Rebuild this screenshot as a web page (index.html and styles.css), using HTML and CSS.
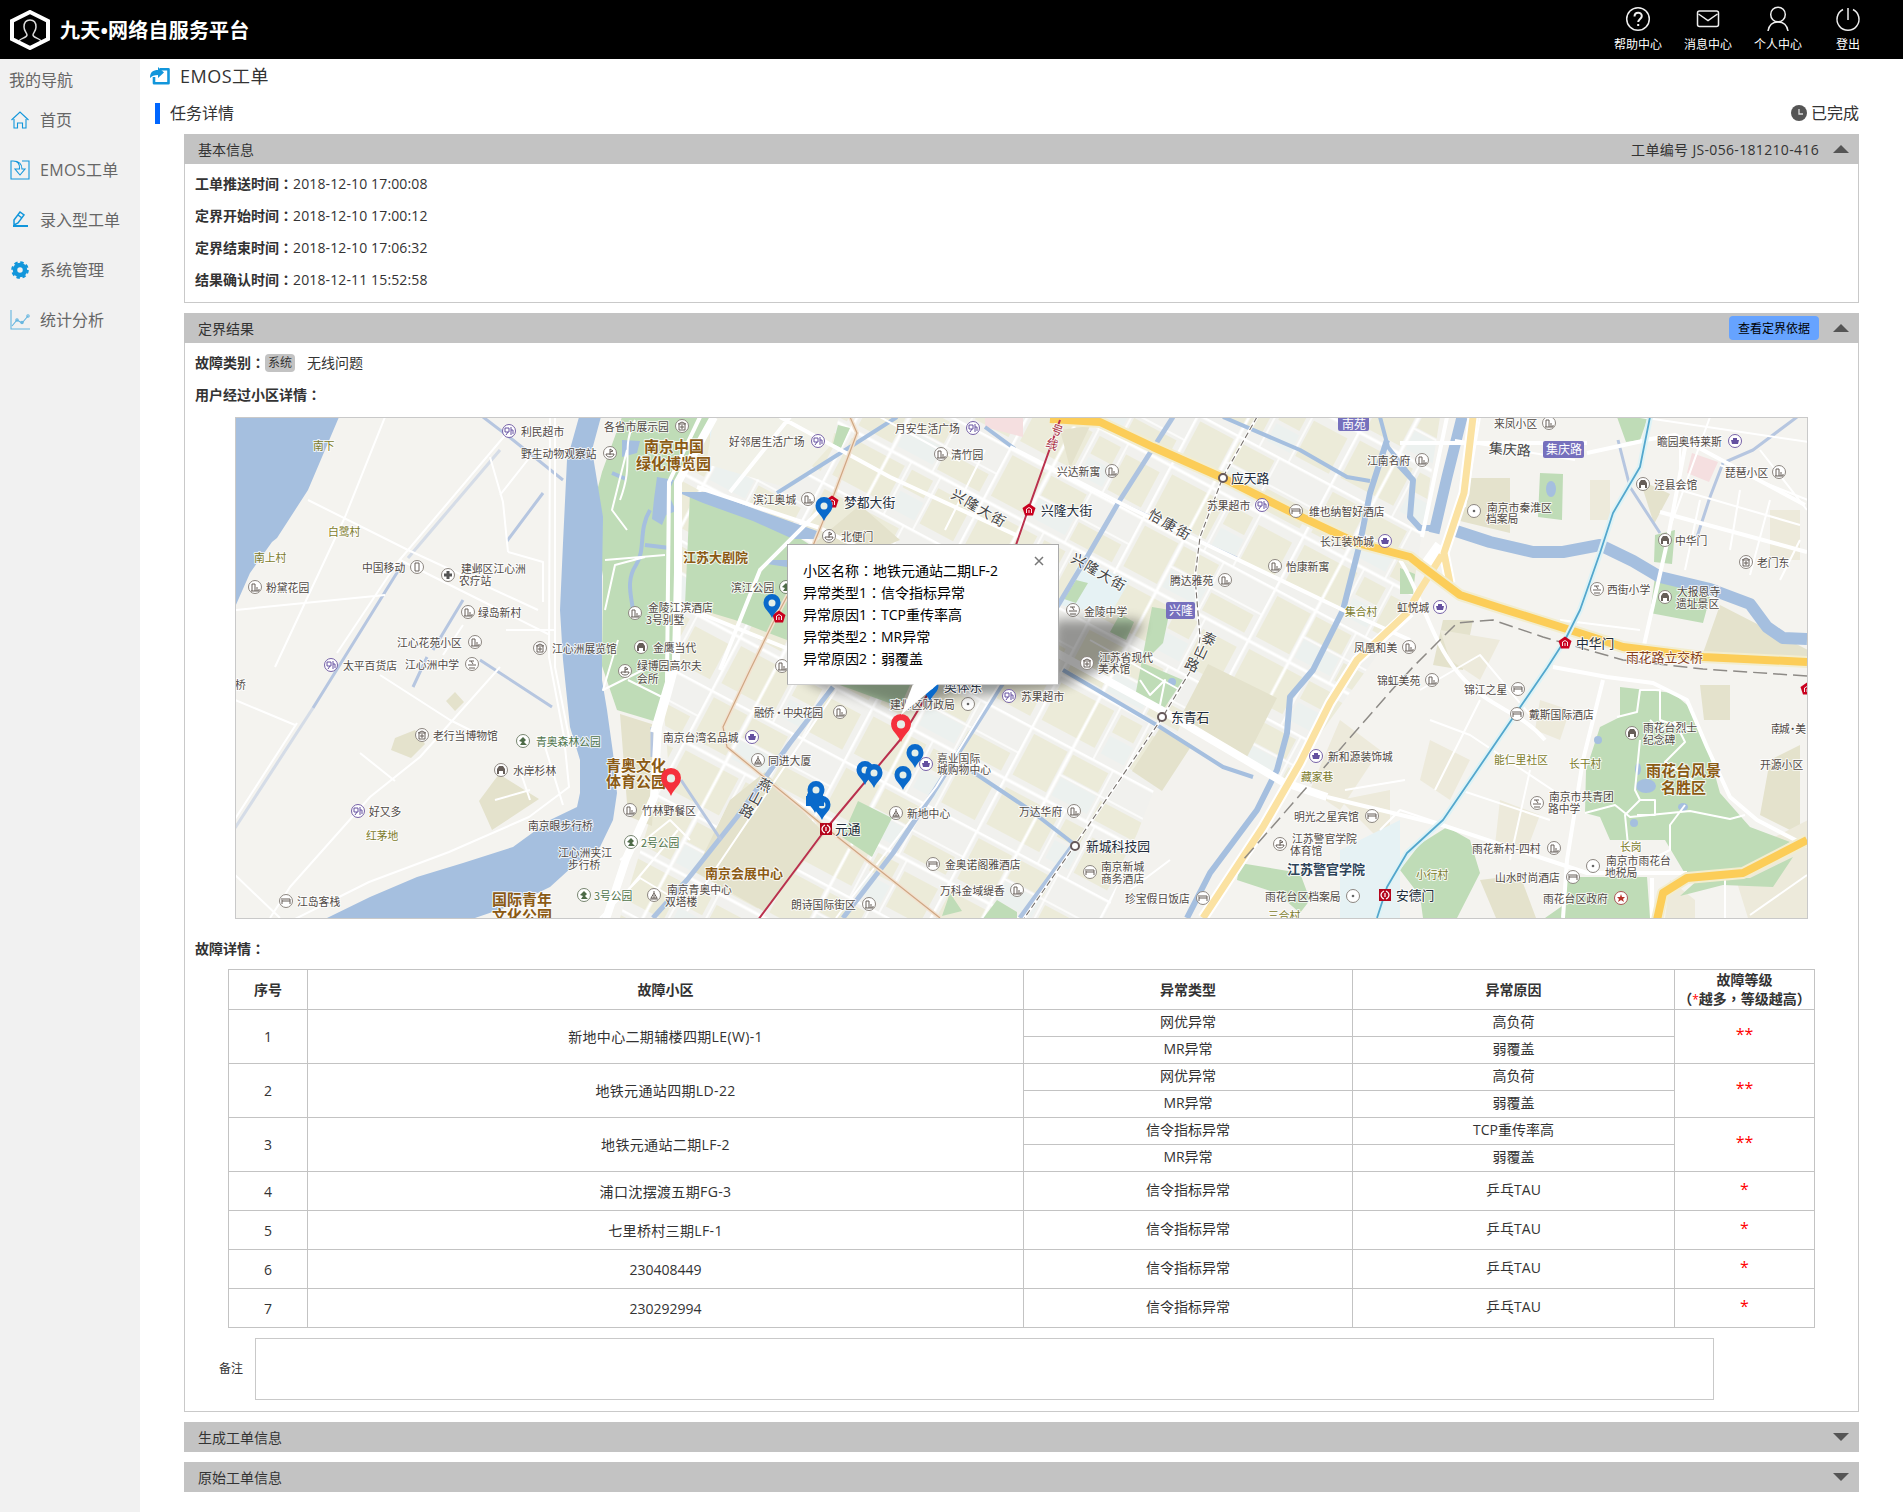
FILE: index.html
```html
<!DOCTYPE html>
<html lang="zh-CN">
<head>
<meta charset="utf-8">
<title>九天•网络自服务平台</title>
<link rel="stylesheet" href="styles.css">
</head>
<body>
<header class="topbar">
  <svg class="logo" viewBox="0 0 40 40"><path d="M20 2 38 11V29L20 38 2 29V11Z" fill="none" stroke="#fff" stroke-width="4"/><path d="M9 31c1-3 8-3 8-6 0-2-3-4-3-8 0-5 2-7 6-7s6 2 6 7c0 4-3 6-3 8 0 3 7 3 8 6" fill="none" stroke="#ddd" stroke-width="1.5"/></svg>
  <h1 class="brand">九天•网络自服务平台</h1>
  <nav class="topnav">
    <a class="topnav-item"><svg viewBox="0 0 26 26"><circle cx="13" cy="13" r="11.3"/><path d="M9.5 10.5c0-5 7.3-5 7.3-.6 0 3-3.600 3-3.600 6.200" stroke-width="2"/><path d="M13.200 18v2" stroke-width="2"/></svg>帮助中心</a>
    <a class="topnav-item"><svg viewBox="0 0 26 26"><rect x="2.500" y="5" width="21" height="15.500" rx="2"/><path d="M3.500 8 13 14.500 22.500 8"/></svg>消息中心</a>
    <a class="topnav-item"><svg viewBox="0 0 26 26"><circle cx="13" cy="8.500" r="7.300"/><path d="M3 25c1-6 4.500-9 10-9s9 3 10 9"/></svg>个人中心</a>
    <a class="topnav-item"><svg viewBox="0 0 26 26"><path d="M8 3.500a11 11 0 1 0 10 0M13 2v12"/></svg>登出</a>
  </nav>
</header>
<div class="layout">
  <aside class="sidebar">
    <div class="side-title">我的导航</div>
    <a class="side-item"><svg viewBox="0 0 20 20"><path d="M1.500 10 10 2l8.500 8M4 9v9h3.500v-5h5v5H16V9"/></svg><span>首页</span></a>
    <a class="side-item"><svg viewBox="0 0 20 20"><path d="M3 1H1v18h18V1h-7"/><path d="M3 1c5 0 7 3 6.500 8H5l5 6 5-6h-3c0-5-3-8-9-8Z"/></svg><span class="latin">EMOS工单</span></a>
    <a class="side-item"><svg viewBox="0 0 20 20"><path d="M3 16h15" stroke-width="2"/><path d="m4 15 0-5 6-8 4 3-6 8Z M8 5l4 3" stroke-width="1.500"/></svg><span>录入型工单</span></a>
    <a class="side-item"><svg viewBox="0 0 20 20"><circle cx="10" cy="10" r="5" stroke-width="4.500"/><circle cx="10" cy="10" r="7.800" stroke-width="2" stroke-dasharray="3.500 2.626"/></svg><span>系统管理</span></a>
    <a class="side-item"><svg class="pale" viewBox="0 0 20 20"><path d="M1 0v19h19"/><path d="m2 16 5-6 5 3 6-7"/><circle cx="7" cy="10" r="1.200"/><circle cx="12" cy="12.500" r="1.200"/><circle cx="18" cy="6" r="1.200"/></svg><span>统计分析</span></a>
  </aside>
  <main class="main">
    <div class="page-title"><svg viewBox="0 0 20 18"><path d="M10 2.200h8.500v14H4V10" fill="none" stroke="#1296db" stroke-width="2.600" stroke-linejoin="round"/><path d="M0 11C0 5 3 3 8 3V0l6 5.500L8 11V8C4 8 2 9 0 11Z" fill="#1296db"/></svg><span>EMOS工单</span></div>
    <div class="section-row"><i class="mark"></i><span>任务详情</span>
      <span class="status"><svg viewBox="0 0 16 16"><circle cx="8" cy="8" r="8" fill="#555"/><path d="M8 4v5h4" fill="none" stroke="#ddd" stroke-width="1.300"/></svg>已完成</span></div>

    <section class="panel">
      <div class="panel-head"><span>基本信息</span><span class="order-no">工单编号 JS-056-181210-416</span><i class="tri up"></i></div>
      <div class="panel-body basic">
        <p><b>工单推送时间<span class="pc" lang="zh-TW">：</span></b>2018-12-10 17:00:08</p>
        <p><b>定界开始时间<span class="pc" lang="zh-TW">：</span></b>2018-12-10 17:00:12</p>
        <p><b>定界结束时间<span class="pc" lang="zh-TW">：</span></b>2018-12-10 17:06:32</p>
        <p><b>结果确认时间<span class="pc" lang="zh-TW">：</span></b>2018-12-11 15:52:58</p>
      </div>
    </section>

    <section class="panel">
      <div class="panel-head"><span>定界结果</span><button class="basis">查看定界依据</button><i class="tri up"></i></div>
      <div class="panel-body result">
        <p class="row"><b>故障类别<span class="pc" lang="zh-TW">：</span></b><span class="tag">系统</span>无线问题</p>
        <p class="row"><b>用户经过小区详情<span class="pc" lang="zh-TW">：</span></b></p>
        <div class="map">
<svg class="map-canvas" viewBox="236 418 1571 500">
<defs>
<pattern id="blocks" width="150" height="118" patternUnits="userSpaceOnUse" patternTransform="translate(1010 447) rotate(28)">
<path fill="#f1f1ee" d="M0 0h150v118H0z"/><path fill="#ecebd9" d="M6 6h38v46H6zM50 6h40v22H50zM96 34h48v20H96zM6 66h60v42H6zM74 66h24v20H74zM106 70h38v40h-38z"/><path fill="#ecf1ef" d="M50 32h40v20H50zM74 90h26v20H74z"/>
<path stroke="#fff" stroke-width="3" fill="none" d="M0 1h150M0 59h150M47 0v118M1 0v118"/><path stroke="#fff" stroke-width="1.500" fill="none" d="M93 0v59M103 59v59M47 30h103M70 59v59"/></pattern>
<filter id="soft" x="-20%" y="-50%" width="140%" height="200%"><feGaussianBlur stdDeviation="6"/></filter>
<g id="ring"><circle r="6.500" fill="#fff" stroke="#8c8680"/></g>
<g id="bld"><use href="#ring"/><path class="g" d="M-3 4v-7h3v7M2 4V0M4 4V2M-4 4h8"/></g>
<g id="shop"><circle r="6.500" fill="#fff" stroke="#7662a8"/><path class="gp" d="M-4-3h4v4h-4zM-3 4l2-3M2-4v8M2-1h2v4"/></g>
<g id="bag"><circle r="6.500" fill="#fff" stroke="#7662a8"/><path d="M-4-1h8l-1 4h-6zM-2-3h4v2h-4z" fill="#6450a0"/></g>
<g id="bed"><use href="#ring"/><path class="g" d="M-4-3v6M-4 0h8v3M-3-2h7v2"/></g>
<g id="dot"><use href="#ring"/><circle r="1.300" fill="#666"/></g>
<g id="park"><circle r="6.500" fill="#fff" stroke="#76856f"/><path d="M-4 0l4-4 3 3-2 2 3 3h-7l2-3z" fill="#4e6b48"/></g>
<g id="gate"><use href="#ring"/><path d="M-4 4V-1L-2-4h4l2 3v5H2V1h-4v3z" fill="#665e59"/></g>
<g id="sch"><use href="#ring"/><path class="g" d="M-3-3h5M-1-3l2 3M-4 1h8M-3 4h6"/></g>
<g id="mus"><use href="#ring"/><path class="g" d="M-3-2h6v6h-6zM-4-2l4-2 4 2M-1 0h2v2h-2z"/></g>
<g id="flag"><use href="#ring"/><path class="g" d="M0-4v6M0-4l3 2-3 1M-4 1c0 4 8 4 8 0z"/></g>
<g id="tower"><use href="#ring"/><path class="g" d="M0-4v2l3 5h-6l3-5M-4 4h8M0 0v3"/></g>
<g id="med"><use href="#ring"/><path d="M-4 0h8M0-4v8" stroke="#555" stroke-width="3"/></g>
<g id="phone"><use href="#ring"/><path class="g" d="M-2-4h4v8h-4z"/></g>
<g id="metro"><path d="M0-6.500 6.500-2 4 5.500h-8L-6.500-2z" fill="#c9001e"/><path d="M-2.500 3v-4l2.500-1.500 2.500 1.500v4M0 3V0" fill="none" stroke="#fff" stroke-width=".9"/></g>
<g id="metro2"><path d="M-6-6H6V6H-6z" fill="#b5071d"/><path d="M-1-4c-4 2-4 6 0 8M1-4c4 2 4 6 0 8M0-2v4" fill="none" stroke="#fff" stroke-width="1.200"/></g>
<g id="stop"><circle r="4" fill="#fff" stroke="#66595a" stroke-width="2"/></g>
<g id="pin"><path d="M0 0C-3-7-8.500-9-8.500-15.500a8.500 8.500 0 0 1 17 0C8.500-9 3-7 0 0Z"/><circle cy="-15" r="3.500" fill="#e5efe8"/></g>
</defs>
<path d="M235 417h1573v502H235z" fill="#f4f3ef"/>
<path d="M640 417H1440L1410 610 1330 720 1190 918H620L668 760Z" fill="url(#blocks)"/>
<!-- parcels -->
<path fill="#f3f2ee" d="M1180 726 1290 785 1262 830 1195 918H1105L1150 800Z"/>
<path fill="#e4e2cc" d="M1208 664 1277 698 1247 757 1178 722ZM1160 728l32 17-30 46-30-20ZM620 714l38 12-6 100-24-10ZM800 555l60-50 40 35-60 25ZM730 800l35-28 60 62-60 78-70-40ZM1460 478h50v55l-50-12ZM479 801l20-27 40 25-47 31ZM455 692l9 10 -9 9-9-10ZM395 738l20-8 10 14-14 14-20-8ZM1060 430l30-4-20 42ZM1640 480l30 14-16 30ZM1700 685h30v35h-26ZM1480 880l40-5 16 43h-40ZM1720 605l88 45v18l-105-15ZM1770 760l30-15v90l-40-20ZM1443 620h30l-10 50-30-5Z"/>
<path fill="#edeadb" d="M1440 630l60 10-20 40-30-20ZM1500 800l40 15-15 40-30-10ZM1730 860l78-40v98h-60ZM1540 700l30 10-10 30-25-10ZM1770 510h30v50h-30ZM1430 740l40 20-20 40-30-20ZM1590 480h20v40h-20ZM1340 800l50-10v60ZM1340 720l40 30-40 60-30-20ZM1670 880l25 20v18h-30Z"/>
<path fill="#f5dfe0" d="M1692 453l26 9-9 20-22-9ZM985 417h38v20l-38-10Z"/>
<path fill="#e6f2f4" d="M710 420l90 0-30 45-60-15ZM1340 850l60-30v98h-60ZM1080 560l50 20-20 35-50-10Z"/>
<!-- parks -->
<g fill="#bfdcb7">
<path d="M622 417h90l-35 65-1 80-4 98-7 30-8 32-40-12-15-44 1-90-11-66 10-38Z"/>
<path d="M690 493l75 23 50 32-28 52v40l-52-20-50-15Z"/>
<path d="M1152 607l18 3-7 33-20 20 40 17-20 30-28-13ZM1076 580l12 3-12 20-12-4ZM1120 614l14 8-8 18-16-8ZM858 801l34 17-20 39-30-20ZM840 685h70l-10 22ZM950 893l12 18-20 5ZM997 900l20 12v8h-35Z"/>
<path d="M1240 863l60 10 10 27-10 13-23-20-40-13ZM1540 473l23 1-1 46-24-3ZM1617 417h31l-8 23-14 2ZM1655 535l20-5-3 34-18-2ZM1655 577l55 20-7 26-53-10ZM1400 568l15 6-2 20h-13ZM1447 827l23 13 10 33-23 45h-34l-3-22-20-26 20-26Z"/>
<path d="M1620 687l53 6 20 17 17 47 10 36 30 34 40 15-47 28-56 7-22-37h-55l-10-23-15-4 1-43 14-43 20-10ZM1567 877h80l3 41h-105l20-14ZM1680 896l20-18h50l43-21-20 30-50-2ZM838 425l12 3-9 20-8-4Z"/>
</g>
<path fill="#f1f1e8" d="M714 417h125l-8 28-40 44-85-25Z"/>
<!-- water -->
<g fill="#a5bfdf">
<path d="M235 417h104l-31 73-31 48-5 4-22 31-15 34Z"/>
<path d="M579 417l-12 43-4 83-3 67 3 50 7 67 10 33v33l-3 14-27 13-37 27-50 16-46 14-47 20-43 21h148l38-13 37-18 33-30 17-10 13-27 4-27-4-40-6-43-5-30v-103l1-60-11-67 10-37 11-36 9-20Z"/>
<path d="M677 492h33l45 17 62 22v8h-24l-40-18-50-18Z"/><path d="M657 477l17 3-6 13 8 18-10 4-4 10-10-6 2-20ZM622 440l18 1-3 12-15 4ZM770 560l17 0v7l-20-3Z"/>
<ellipse cx="1646" cy="786" rx="10" ry="7"/><ellipse cx="1638" cy="769" rx="3" ry="6"/><ellipse cx="1683" cy="807" rx="5" ry="4"/><ellipse cx="1551" cy="489" rx="5" ry="8"/><circle cx="1634" cy="823" r="4"/><circle cx="1598" cy="740" r="4"/><circle cx="1172" cy="682" r="4"/>
</g>
<g class="water">
<path class="w4" d="M650 510c-12 20-4 40-14 55s-5 30-3 45M645 545l25 3"/>
<path d="M1462 417l-15 60-13 56" stroke-width="11"/>
<path d="M1453 530l37 12 43 10 30 0 37-7 33 16 27 16 50 12 40 15 17 23 16 11 24 1" stroke-width="12"/>
<path class="w6" d="M1398 464l15 16-3 37 10 11h15"/>
<path class="w6" d="M1387 440l-17 53-10 50-17 67-30 60-23 27-3 36-10 37-20 40-47 63-23 45"/>
<path class="w4" d="M1223 417l77 33 47 27 23 4M1063 670l97 57 63 40 30 10M777 493l73-46 47-30M985 427l30 22M970 770l60 40 44 34M612 473l14 6M1380 417l8 30 22 28"/>
<path class="w3" d="M483 417l30 23 50 40M480 660l72 47M403 563l-90 145M427 657l-14 30M463 600l-30 50M543 493l-36 48"/>
<path class="w3 fade" d="M313 708l-78 120M500 450l-92 108"/>
<path class="w5" d="M1173 417l-53 83-33 57-30 50-57 80-67 106-40 60-50 65M833 687l-43 56-53 74-50 63-34 38M1074 844l-54 74"/>
<path class="w3" d="M681 780l40 60M652 727v30"/>
<path class="w3" d="M1797 417l-44 33-30 13-13 34-13 40" stroke="#bfc0dc"/><path class="w3" d="M1618 440l12 47 30 46M1120 503l40 18M1197 540l40 18"/>
</g>
<!-- streets -->
<g class="road">
<path class="r7" d="M1055 652l108 59 120 71 44 15M714 417l-36 65 0 90-2 90-8 30-10 35-4 70-28 62-20 60"/>
<path class="r4" d="M700 417l-31 65-2 200-15 50M697 487l123 41 60 30M1010 447l110 56 77 37 146 70 67 30M780 417l110 60 130 60M790 417l-60 75M830 500l-70 70-40 100M687 608l104 42M1327 797l115 28 115 38 30 10h100M1553 667l54 10 46 6 34 17 20 47 23 50 27 23 50 26M1603 680l-20 80-16 100-4 58M1652 878v40M1587 453l60-13M1400 443h187M1687 437l-20 106-27 120M1400 560c20 30 30 80 60 115s60 35 85 65M1645 440l30-5 130 70M1447 417l-25 120M1660 512l147 40"/>
<path d="M1710 417l-40 110M1720 465l88 35M1760 450l47 60M1640 417l168 25M1770 500l-20 75M1800 540l-20 40M1480 417l-15 90M1455 440l120 20M1420 690l60-35 50 60M1430 720l40 15 90 60M1480 700l-45 90M1460 790l90 30M1380 830l20-20 45 15M1680 440v50l120 35M1700 500l-15 70M1740 490l-10 60M1560 620l80 10M1345 790l60-10M1530 770l-20 90M1725 880v38M1750 915l57-40"/>
<path d="M308 500l100 50 130 60M385 417l-40 100-70 150M400 560l100 50 50 25M490 457l13 45 5 50M500 495l30-38M508 552l35 10v40M235 610l150-15M235 700l60 25M380 675l70 45 40 20M500 667l-80 90-50 40-80 90-20 31M360 753l35 28M235 875l45 43M297 723l-62 96M507 433l-110 130-60 90M550 417l-1 240 15 80 5 50-40 30-80 35-80 30-90 45M555 417v250l14 70M556 630h-50M463 625l-20 30M543 740l20 65M520 770l10 30M495 800l35-10M618 640l-15 50 40-20M628 680l40 20M620 500c15-40 0-50 15-80M605 560l60-5M605 610l10-45 30-8M627 530l-15-20 15-60"/>
<path d="M1617 717l20-5 3-22h20v30l30 10M1650 720l10 10 15-8 10 20-20 20 30 20M1640 740l-5 50 5 10-15 15 3 30 5 10M1585 813l30-8 15 12 60-6 40 8 15-4M1640 800h15v15h-18M1685 805l-15 20v25l-20 10"/>
<path d="M1140 680l10 15 15-15-5 25M880 417l80 44M985 450l-40 80M1090 640l90 50M620 860l50-40 20 20M628 890l50-60M600 918l40-40 50 30M1170 860l-40 30M837 689l-150 222M1000 683l-64 104-100 131"/>
</g>
<g fill="none" stroke-linejoin="round">
<path d="M1473 417l-9 76-20 60 6 30M1440 545l-18 25M1410 612l-53 48-27 43-30 60-37 64-60 91" stroke="#fff" stroke-width="11"/>
<path d="M1473 417l-9 76-20 60 6 30M1442 555l-22 35-13 23-50 47-27 43-30 60-37 64-60 91" stroke="#fbe2a2" stroke-width="7"/>
<path d="M1050 419l50 3 53 25 70 31 70 35 64 30 53 14 10 8 40 30 40 13 70 22 53 17 80 10 104 5M1657 920l6-27 24-15 56-5 64-33" stroke="#f2edcf" stroke-width="12"/>
<path d="M1050 419l50 3 53 25 70 31 70 35 64 30 53 14 10 8 40 30 40 13 70 22 53 17 80 10 104 5M1657 920l6-27 24-15 56-5 64-33" stroke="#fccd58" stroke-width="8"/>
<path d="M1650 417l-10 50-27 46-13 40-20 57-15 30-18 28-104 152-36 33-20 34-10 31" stroke="#dff3f6" stroke-width="6"/>
<path d="M1650 417l-10 50-27 46-13 40-20 57-15 30-18 28-104 152-36 33-20 34-10 31" stroke="#53a7cd" stroke-width="1.800"/>
<path d="M850 417l7 16-24 64-23 56-37 70-23 47-27 57 4 20 98 80 115 91" stroke="#f2e2d0" stroke-width="4"/>
<path d="M850 417l7 16-24 64-23 56-37 70-23 47-27 57 4 20 98 80 115 91" stroke="#cfa682" stroke-width="1.200"/>
<path d="M1060 420l-32 90-12 35-90 152-26 43-75 90-67 90" stroke="#ba304d" stroke-width="2"/>
<path d="M1257 417l-34 60-23 60-5 40 5 60-3 23-35 58-87 127-52 75" stroke="#fff" stroke-width="3"/>
<path d="M1257 417l-34 60-23 60-5 40 5 60-3 23-35 58-87 127-52 75" stroke="#77716c" stroke-width="1.100" stroke-dasharray="6 3"/>
<path d="M1807 676l-104-7-80-9-80-23-50-17-36 3-44 44-23 25-83 95-64 73" stroke="#8d8a86" stroke-width="1.500" stroke-dasharray="14 6"/>
</g>
<!-- badges -->
<g fill="#7670bd"><rect x="1338" y="413" width="31" height="18" rx="2"/><rect x="1166" y="602" width="29" height="17" rx="2"/><rect x="1543" y="441" width="41" height="17" rx="2"/></g>
<g class="bt"><text x="1342" y="423">南苑</text><text x="1169" y="609">兴隆</text><text x="1546" y="448">集庆路</text></g>
<!-- place icons -->
<use href="#shop" x="509" y="431"/><use href="#mus" x="682" y="426"/><use href="#flag" x="610" y="453"/><use href="#phone" x="417" y="567"/><use href="#med" x="448" y="575"/><use href="#bld" x="255" y="587"/><use href="#bld" x="468" y="612"/><use href="#bld" x="475" y="642"/><use href="#mus" x="540" y="648"/><use href="#shop" x="331" y="665"/><use href="#sch" x="472" y="664"/><use href="#mus" x="422" y="735"/><use href="#park" x="523" y="741"/><use href="#gate" x="501" y="770"/><use href="#shop" x="358" y="811"/><use href="#bed" x="286" y="901"/><use href="#park" x="584" y="895"/>
<use href="#shop" x="818" y="441"/><use href="#shop" x="973" y="428"/><use href="#bld" x="941" y="454"/><use href="#bld" x="808" y="499"/><use href="#flag" x="829" y="536"/><use href="#park" x="786" y="587"/><use href="#bld" x="635" y="613"/><use href="#gate" x="641" y="647"/><use href="#flag" x="625" y="671"/><use href="#bld" x="782" y="666"/>
<use href="#bld" x="1112" y="471"/><use href="#bld" x="1422" y="460"/><use href="#shop" x="1262" y="505"/><use href="#bed" x="1296" y="511"/><use href="#bag" x="1385" y="541"/><use href="#bld" x="1275" y="566"/><use href="#bld" x="1225" y="580"/><use href="#sch" x="1073" y="610"/><use href="#bag" x="1440" y="607"/><use href="#bld" x="1409" y="647"/><use href="#bld" x="1432" y="680"/>
<use href="#bld" x="1549" y="423"/><use href="#bag" x="1735" y="441"/><use href="#bld" x="1779" y="472"/><use href="#gate" x="1643" y="484"/><use href="#dot" x="1474" y="511"/><use href="#gate" x="1665" y="540"/><use href="#mus" x="1746" y="562"/><use href="#sch" x="1597" y="589"/><use href="#gate" x="1665" y="597"/>
<use href="#bed" x="1518" y="689"/><use href="#bed" x="1517" y="714"/><use href="#gate" x="1632" y="733"/><use href="#sch" x="1537" y="803"/><use href="#bld" x="1554" y="848"/><use href="#dot" x="1593" y="866"/><use href="#bed" x="1573" y="877"/><g transform="translate(1621 898)"><circle r="6.500" fill="#fff" stroke="#a55"/><path d="M0-4 1-1h3L2 1l1 3-3-2-3 2 1-3-2-2h3z" fill="#b83228"/></g>
<use href="#bag" x="1316" y="756"/><use href="#bld" x="1074" y="811"/><use href="#bed" x="1372" y="816"/><use href="#flag" x="1280" y="844"/><use href="#bed" x="1090" y="872"/><use href="#bed" x="1203" y="898"/><use href="#dot" x="1353" y="896"/><use href="#dot" x="968" y="704"/><use href="#bld" x="840" y="712"/><use href="#bag" x="752" y="737"/><use href="#tower" x="758" y="760"/><use href="#bag" x="926" y="764"/><use href="#bld" x="630" y="810"/><use href="#park" x="631" y="842"/><use href="#tower" x="654" y="895"/><use href="#bld" x="869" y="904"/><use href="#tower" x="896" y="813"/><use href="#bed" x="933" y="864"/><use href="#bld" x="1017" y="890"/>
<use href="#metro" x="832" y="502"/><use href="#metro" x="779" y="617"/><use href="#metro" x="1029" y="510"/><use href="#metro" x="1565" y="643"/><use href="#metro" x="1807" y="689"/><use href="#metro2" x="826" y="829"/><use href="#metro2" x="1385" y="895"/><use href="#stop" x="1223" y="478"/><use href="#stop" x="1162" y="717"/><use href="#stop" x="1075" y="846"/>
<path d="M800 672h250l5-52h82q12 4-4 18-30 42-90 52l-90 6-48 14-60-18q-40-4-45-20Z" fill="#000" opacity=".38" filter="url(#soft)"/>
<use href="#mus" x="1087" y="663"/><use href="#shop" x="1009" y="696"/>
<!-- place names -->
<g class="t">
<text x="521" y="431">利民超市</text><text x="604" y="426">各省市展示园</text><text x="521" y="453">野生动物观察站</text><text x="362" y="567">中国移动</text><text x="461" y="568">建邺区江心洲</text><text x="459" y="580">农疗站</text><text x="266" y="587">粉黛花园</text><text x="478" y="612">绿岛新村</text><text x="397" y="642">江心花苑小区</text><text x="552" y="648">江心洲展览馆</text><text x="343" y="665">太平百货店</text><text x="405" y="664">江心洲中学</text><text x="235" y="684">桥</text><text x="433" y="735">老行当博物馆</text><text x="513" y="770">水岸杉林</text><text x="369" y="811">好又多</text><text x="528" y="825">南京眼步行桥</text><text x="558" y="852">江心洲夹江</text><text x="568" y="864">步行桥</text><text x="297" y="901">江岛客栈</text>
<text x="729" y="441">好邻居生活广场</text><text x="895" y="428">月安生活广场</text><text x="951" y="454">清竹园</text><text x="753" y="499">滨江奥城</text><text x="841" y="536">北便门</text><text x="731" y="587">滨江公园</text><text x="648" y="607">金陵江滨酒店</text><text x="646" y="619">3号别墅</text><text x="653" y="647">金鹰当代</text><text x="637" y="665">绿博园高尔夫</text><text x="637" y="678">会所</text>
<text x="1057" y="471">兴达新寓</text><text x="1367" y="460">江南名府</text><text x="1207" y="505">苏果超市</text><text x="1309" y="511">维也纳智好酒店</text><text x="1320" y="541">长江装饰城</text><text x="1286" y="566">怡康新寓</text><text x="1170" y="580">腾达雅苑</text><text x="1084" y="611">金陵中学</text><text x="1397" y="607">虹悦城</text><text x="1354" y="647">凤凰和美</text><text x="1099" y="657">江苏省现代</text><text x="1098" y="668">美术馆</text>
<text x="1494" y="423">来凤小区</text><text x="1657" y="441">瞻园奥特莱斯</text><text x="1725" y="472">琵琶小区</text><text x="1654" y="484">泾县会馆</text><text x="1487" y="507">南京市秦淮区</text><text x="1486" y="518">档案局</text><text x="1675" y="540">中华门</text><text x="1757" y="562">老门东</text><text x="1607" y="589">西街小学</text><text x="1677" y="591">大报恩寺</text><text x="1676" y="603">遗址景区</text>
<text x="1377" y="680">锦虹美苑</text><text x="1464" y="689">锦江之星</text><text x="1529" y="714">戴斯国际酒店</text><text x="1643" y="727">雨花台烈士</text><text x="1643" y="739">纪念碑</text><text x="1771" y="728" textLength="35">南城·美</text><text x="1760" y="764">开源小区</text><text x="1549" y="796">南京市共青团</text><text x="1548" y="808">路中学</text><text x="1472" y="848">雨花新村-四村</text><text x="1606" y="860">南京市雨花台</text><text x="1605" y="872">地税局</text><text x="1495" y="877">山水时尚酒店</text><text x="1543" y="898">雨花台区政府</text>
<text x="1021" y="696">苏果超市</text><text x="1328" y="756">新和源装饰城</text><text x="1019" y="811">万达华府</text><text x="1294" y="816">明光之星宾馆</text><text x="1292" y="838">江苏警官学院</text><text x="1290" y="850">体育馆</text><text x="1101" y="866">南京新城</text><text x="1101" y="878">商务酒店</text><text x="1125" y="898">珍宝假日饭店</text><text x="1265" y="896">雨花台区档案局</text>
<text x="890" y="704">建邺区财政局</text><text x="754" y="712" textLength="69">融侨·中央花园</text><text x="663" y="737">南京台湾名品城</text><text x="768" y="760">同进大厦</text><text x="937" y="758">嘉业国际</text><text x="937" y="769">城购物中心</text><text x="642" y="810">竹林野餐区</text><text x="667" y="889">南京青奥中心</text><text x="665" y="901">双塔楼</text><text x="791" y="904">朗诗国际街区</text><text x="907" y="813">新地中心</text><text x="945" y="864">金奥诺阁雅酒店</text><text x="940" y="890">万科金域缇香</text>
</g>
<g class="t green"><text x="536" y="741">青奥森林公园</text><text x="594" y="895">3号公园</text><text x="641" y="842">2号公园</text></g>
<g class="t olive"><text x="313" y="445">南下</text><text x="328" y="531">白鹭村</text><text x="254" y="557">南上村</text><text x="366" y="835">红茅地</text><text x="1345" y="611">集合村</text><text x="1494" y="759">能仁里社区</text><text x="1569" y="763">长干村</text><text x="1620" y="846">长岗</text><text x="1416" y="874">小行村</text><text x="1301" y="776">藏家巷</text><text x="1268" y="915">三合村</text></g>
<g class="t big"><text x="844" y="501">梦都大街</text><text x="1041" y="509">兴隆大街</text><text x="1231" y="477">应天路</text><text x="1576" y="642">中华门</text><text x="1396" y="894">安德门</text><text x="1171" y="716">东青石</text><text x="1086" y="845">新城科技园</text><text x="835" y="828">元通</text><text x="944" y="685">奥体东</text><text x="1626" y="656" class="rust">雨花路立交桥</text></g>
<g class="t street"><text transform="translate(953 492) rotate(30)" textLength="60">兴隆大街</text><text transform="translate(1073 556) rotate(30)" textLength="60">兴隆大街</text><text transform="translate(1150 512) rotate(30)" textLength="46">怡康街</text><text transform="translate(1489 447) rotate(4)">集庆路</text>
<text transform="translate(1203 635) rotate(25)">泰</text><text transform="translate(1195 648) rotate(25)">山</text><text transform="translate(1186 661) rotate(25)">路</text><text transform="translate(759 781) rotate(28)">燕</text><text transform="translate(750 794) rotate(28)">山</text><text transform="translate(741 807) rotate(28)">路</text></g>
<g class="t metro-name"><text transform="translate(1052 427) rotate(20)">号</text><text transform="translate(1047 441) rotate(20)">线</text></g>
<g class="t scenic"><text x="644" y="445">南京中国</text><text x="636" y="462">绿化博览园</text><text x="606" y="764">青奥文化</text><text x="606" y="780">体育公园</text><text x="492" y="898">国际青年</text><text x="492" y="914">文化公园</text><text x="1646" y="769">雨花台风景</text><text x="1661" y="786">名胜区</text></g>
<g class="t scenic mid"><text x="683" y="556">江苏大剧院</text><text x="705" y="872">南京会展中心</text><text x="1287" y="868" class="slate">江苏警官学院</text></g>
<!-- markers -->
<g fill="#0a6acb"><use href="#pin" x="824" y="521"/><use href="#pin" x="772" y="618"/><use href="#pin" x="930" y="701"/><use href="#pin" x="915" y="768"/><use href="#pin" x="903" y="790"/><use href="#pin" x="865" y="785"/><use href="#pin" x="874" y="788"/><use href="#pin" x="822" y="820"/><use href="#pin" x="815" y="813"/><path d="M806 796h18v10h-18z"/><use href="#pin" x="816" y="805"/></g>
<g fill="#f5303c"><use href="#pin" transform="translate(901 742) scale(1.170)"/><use href="#pin" transform="translate(671 796) scale(1.170)"/></g>
<path d="M913 684h25l-37 31Z" fill="#fff"/>
</svg>
          <div class="popup">
            <svg class="close" viewBox="0 0 10 10"><path d="m1 1 8 8M9 1 1 9"/></svg>
            <p>小区名称<span class="pc" lang="zh-TW">：</span>地铁元通站二期LF-2</p>
            <p>异常类型1<span class="pc" lang="zh-TW">：</span>信令指标异常</p>
            <p>异常原因1<span class="pc" lang="zh-TW">：</span>TCP重传率高</p>
            <p>异常类型2<span class="pc" lang="zh-TW">：</span>MR异常</p>
            <p>异常原因2<span class="pc" lang="zh-TW">：</span>弱覆盖</p>
          </div>
        </div>
        <p class="row faults"><b>故障详情<span class="pc" lang="zh-TW">：</span></b></p>
        <table class="fault-table">
          <colgroup><col class="c1"><col class="c2"><col class="c3"><col class="c4"><col class="c5"></colgroup>
          <tr class="tall"><th>序号</th><th>故障小区</th><th>异常类型</th><th>异常原因</th><th class="level">故障等级<br><span class="pc" lang="zh-TW">（</span><em>*</em>越多<span class="pc" lang="zh-TW">，</span>等级越高<span class="pc" lang="zh-TW">）</span></th></tr>
          <tr><td rowspan="2">1</td><td rowspan="2" class="latin">新地中心二期辅楼四期LE(W)-1</td><td class="sub">网优异常</td><td class="sub">高负荷</td><td rowspan="2" class="star">**</td></tr>
          <tr><td class="sub">MR异常</td><td class="sub">弱覆盖</td></tr>
          <tr><td rowspan="2">2</td><td rowspan="2" class="latin">地铁元通站四期LD-22</td><td class="sub">网优异常</td><td class="sub">高负荷</td><td rowspan="2" class="star">**</td></tr>
          <tr><td class="sub">MR异常</td><td class="sub">弱覆盖</td></tr>
          <tr><td rowspan="2">3</td><td rowspan="2" class="latin">地铁元通站二期LF-2</td><td class="sub">信令指标异常</td><td class="sub">TCP重传率高</td><td rowspan="2" class="star">**</td></tr>
          <tr><td class="sub">MR异常</td><td class="sub">弱覆盖</td></tr>
          <tr class="tall"><td>4</td><td class="latin">浦口沈摆渡五期FG-3</td><td class="sub">信令指标异常</td><td class="sub">乒乓TAU</td><td class="star">*</td></tr>
          <tr class="tall"><td>5</td><td class="latin">七里桥村三期LF-1</td><td class="sub">信令指标异常</td><td class="sub">乒乓TAU</td><td class="star">*</td></tr>
          <tr class="tall"><td>6</td><td>230408449</td><td class="sub">信令指标异常</td><td class="sub">乒乓TAU</td><td class="star">*</td></tr>
          <tr class="tall"><td>7</td><td>230292994</td><td class="sub">信令指标异常</td><td class="sub">乒乓TAU</td><td class="star">*</td></tr>
        </table>
        <div class="remark"><label>备注</label><div class="remark-box"></div></div>
      </div>
    </section>

    <section class="panel"><div class="panel-head"><span>生成工单信息</span><i class="tri down"></i></div></section>
    <section class="panel"><div class="panel-head"><span>原始工单信息</span><i class="tri down"></i></div></section>
  </main>
</div>
</body>
</html>
```
FILE: styles.css
```css
* { box-sizing: border-box; }
body { margin: 0; font: 14px "Open Sans", "Noto Sans CJK SC", sans-serif; color: #333; background: #fff; }
p { margin: 0; }
.pc { font-family: "Noto Sans CJK TC", sans-serif; line-height: 1; }
.latin { letter-spacing: .35px; }

.topbar { height: 59px; background: #000; color: #fff; display: flex; align-items: center; padding: 0 20px 0 10px; }
.logo { width: 40px; height: 40px; }
.brand { margin: 0 0 0 10px; padding-top: 2px; font-size: 20px; font-weight: 700; line-height: 30px; letter-spacing: .2px; }
.topnav { margin-left: auto; display: flex; }
.topnav-item { width: 70px; height: 59px; padding-top: 6px; display: flex; flex-direction: column; align-items: center; font-size: 12px; line-height: 26px; }
.topnav-item svg { width: 26px; height: 26px; flex: none; fill: none; stroke: #eee; stroke-width: 1.5; }

.layout { display: flex; height: 1453px; }
.sidebar { width: 140px; flex: none; background: #f1f1f1; color: #666; font-size: 16px; }
.side-title { height: 36px; padding: 7px 0 0 9px; line-height: 29px; }
.side-item { height: 50px; display: flex; align-items: center; gap: 10px; padding-left: 10px; }
.side-item span { padding-bottom: 2px; }
.side-item svg { width: 20px; height: 20px; fill: none; stroke: #1296db; stroke-width: 1.1; }
.side-item svg.pale { stroke: #64b5df; }

.main { flex: 1; padding-right: 44px; }
.page-title { height: 34px; display: flex; align-items: center; gap: 10px; padding-left: 10px; font-size: 18px; letter-spacing: .5px; }
.page-title span { padding-bottom: 2px; }
.page-title svg { width: 20px; height: 18px; }
.section-row { height: 41px; display: flex; align-items: center; padding-left: 15px; font-size: 16px; line-height: 22px; }
.section-row span { padding-bottom: 1px; }
.mark { width: 5px; height: 21px; background: #06f; margin-right: 10px; }
.status { margin-left: auto; display: flex; align-items: center; gap: 4px; }
.status svg { width: 16px; height: 16px; }

.panel { margin: 0 0 10px 44px; }
.panel-head { height: 30px; background: #c3c3c3; display: flex; align-items: center; padding: 0 10px 0 14px; }
.order-no, .basis { margin-left: auto; }
.order-no { letter-spacing: .33px; }
.basis { width: 90px; height: 24px; border: 0; border-radius: 4px; background: #66a3ff; color: #000; font: 12px/26px "Open Sans", "Noto Sans CJK SC", sans-serif; padding: 0; }
.tri { margin-left: auto; width: 16px; height: 8px; background: #555; }
.order-no + .tri, .basis + .tri { margin-left: 14px; }
.up { clip-path: polygon(50% 0, 100% 100%, 0 100%); }
.down { clip-path: polygon(0 0, 100% 0, 50% 100%); }
.panel-body { border: 1px solid #c9c9c9; border-top: 0; }
.basic { height: 139px; padding: 4px 10px; line-height: 32px; letter-spacing: .13px; }
.basic p { height: 32px; }
.basic b { display: inline-block; width: 98px; letter-spacing: 0; }
.result { height: 1069px; padding-top: 4px; }
.row { height: 32px; display: flex; align-items: center; padding: 0 0 2px 10px; }
.tag { width: 30px; height: 18px; border-radius: 4px; background: #c3c3c3; font-size: 12px; line-height: 18px; text-align: center; margin: 2px 12px 0 0; }

.map { position: relative; width: 1573px; height: 502px; margin: 6px 0 0 50px; border: 1px solid #c9c9c9; overflow: hidden; }
.map-canvas { display: block; width: 1571px; height: 500px; }
.popup { position: absolute; left: 551px; top: 126px; width: 272px; height: 141px; padding: 15px; background: #fff; border: 1px solid #ababab; border-bottom-color: #ccc; color: #000; line-height: 22px; clip-path: polygon(0 0, 100% 0, 100% 100%, 151px 100%, 150px 140px, 127px 140px, 126px 100%, 0 100%); }
.popup p { height: 22px; }
.close { position: absolute; right: 14px; top: 11px; width: 10px; height: 10px; stroke: #777; stroke-width: 1.5; }
.g { fill: none; stroke: #665e59; }
.gp { fill: none; stroke: #6450a0; }
.water { fill: none; stroke: #a5bfdf; stroke-linejoin: round; }
.w3 { stroke-width: 3; stroke: #b6c6e0; }
.w4 { stroke-width: 4; }
.w5 { stroke-width: 5; stroke: #adc3e0; }
.w6 { stroke-width: 6; }
.fade { stroke-opacity: .5; }
.road { fill: none; stroke: #fff; stroke-width: 2; stroke-linejoin: round; }
.r4 { stroke-width: 4; }
.r7 { stroke-width: 8; }
.t text, .bt text { dominant-baseline: central; font-family: "Noto Sans CJK SC", sans-serif; }
.t { font-size: 10.8px; fill: #514a46; stroke: #fff; stroke-width: 2px; stroke-opacity: .8; paint-order: stroke; stroke-linejoin: round; }
.bt { font-size: 12px; fill: #fff; }
.green { fill: #4f744b; }
.olive { fill: #7c7b2a; }
.big { font-size: 12.8px; fill: #222c3a; }
.rust { fill: #86401c; }
.street { font-size: 14px; fill: #444; }
.metro-name { font-size: 12px; fill: #a83045; }
.scenic { font-size: 15px; font-weight: 700; fill: #8b5a14; }
.mid { font-size: 13px; }
.slate { fill: #2c4258; }

.faults { margin-top: 14px; }
.fault-table { width: 1587px; margin: 4px 0 0 43px; border-collapse: collapse; table-layout: fixed; text-align: center; }
.c1 { width: 79px; }
.c2 { width: 716px; }
.c3 { width: 329px; }
.c4 { width: 322px; }
.fault-table tr { height: 27px; }
.fault-table .tall { height: 39px; }
th, td { border: 1px solid #c3c3c3; padding: 0; line-height: 19px; }
.fault-table .sub { padding-bottom: 4px; }
em { color: red; font-style: normal; font-weight: 400; font-size: 12px; }
.fault-table .star { color: red; font-size: 16px; padding-bottom: 4px; }
.level { white-space: nowrap; }
.remark { display: flex; align-items: center; margin-top: 10px; padding-left: 34px; font-size: 12px; }
.remark label { padding-bottom: 3px; }
.remark-box { width: 1459px; height: 62px; margin-left: 12px; border: 1px solid #c9c9c9; }
```
